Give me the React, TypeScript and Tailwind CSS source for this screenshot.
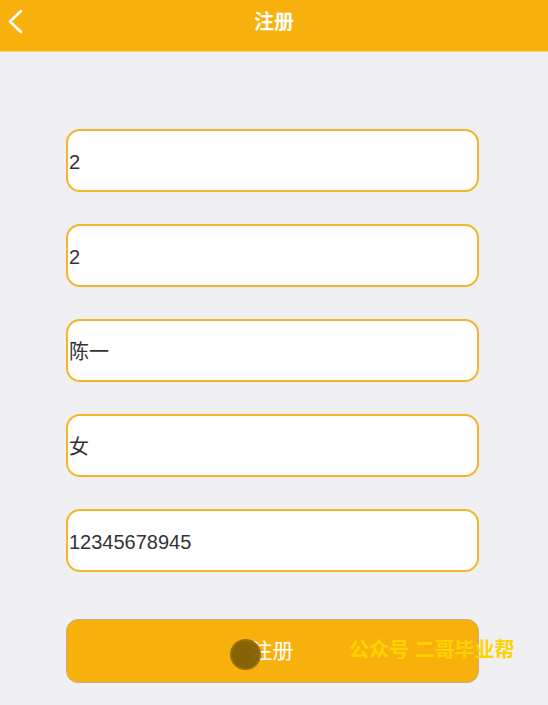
const fields = ['2', '2', '陈一', '女', '12345678945'];

export default function App() {
  return (
    <div
      className="relative w-[548px] h-[705px] overflow-hidden bg-[#f0eff2]"
      style={{ fontFamily: '"Liberation Sans", "Noto Sans CJK SC", sans-serif' }}
    >
      {/* Header */}
      <div className="relative flex items-center justify-center h-[52px] bg-[#f8b10c] border-b border-[#f9d27a]">
        <svg
          className="absolute left-[6px] top-[8px] w-[20px] h-[28px]"
          viewBox="0 0 20 28"
          fill="none"
          stroke="white"
          strokeWidth={2.6}
          strokeLinecap="round"
          strokeLinejoin="round"
        >
          <polyline points="15,3 4,13.5 15,24" />
        </svg>
        <span className="text-white text-[20px] font-bold -mt-[7px]">注册</span>
      </div>

      {/* Form */}
      <div className="flex flex-col gap-[32px] px-[66px] pt-[77px]">
        {fields.map((value, i) => (
          <div
            key={i}
            className="flex items-center h-[63px] w-[413px] rounded-[14px] border-2 border-[#f3b52a] bg-white pl-[1px] pt-[2px]"
          >
            <span className="text-[20px] text-[#333]">{value}</span>
          </div>
        ))}

        <div className="flex items-center justify-center mt-[15px] h-[64px] w-[413px] rounded-[12px] bg-[#f8b10c] border border-[#c9ad7a]">
          <span className="text-white text-[21px]">注册</span>
        </div>
      </div>

      {/* touch indicator */}
      <div className="absolute left-[230px] top-[639px] w-[31px] h-[31px] rounded-full bg-[#7a5a06]/90 border-2 border-[#a07a10]/60" />

      {/* watermark */}
      <div className="absolute left-[349px] top-[635px] text-[20px] font-bold text-[#ffd200] whitespace-nowrap">
        公众号 二哥毕业帮
      </div>
    </div>
  );
}
